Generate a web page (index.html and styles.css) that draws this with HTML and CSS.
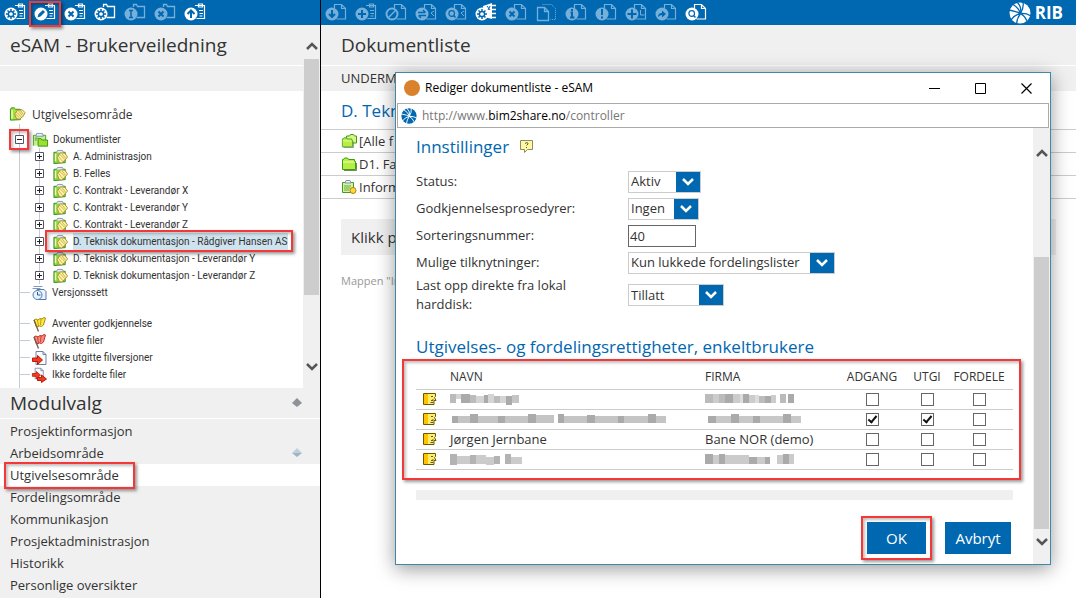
FILE: index.html
```html
<!DOCTYPE html>
<html lang="no">
<head>
<meta charset="utf-8">
<title>eSAM - Brukerveiledning</title>
<link rel="stylesheet" href="styles.css">
</head>
<body>
<svg class="sprite" aria-hidden="true">
  <symbol id="board" viewBox="0 0 22 20"><path d="M11 3.500h9.500v13h-8M14.500 2v3h4V2zM15 8.500h4M15.500 11.500h3.500M15.500 14h3" fill="none" stroke="currentColor" stroke-width="1.200"/><circle cx="7" cy="12" r="6.500" fill="currentColor"/></symbol>
  <symbol id="folder" viewBox="0 0 22 20"><path d="M9.500 5V2.500h3l1 2h7v11h-8" fill="none" stroke="currentColor" stroke-width="1.300"/><circle cx="7" cy="12" r="6.500" fill="currentColor"/></symbol>
  <symbol id="page" viewBox="0 0 22 20"><path d="M9.500 6V2.500h7l4 4v10.500h-9M16.500 2.500v4h4" fill="none" stroke="currentColor" stroke-width="1.200"/><circle cx="7" cy="12" r="6.500" fill="currentColor"/></symbol>
  <symbol id="gear" viewBox="0 0 22 20"><g fill="none" stroke="#0067b1"><circle cx="7" cy="12" r="2.600" stroke-width="1.500"/><path d="M7 7v2M7 15v2M2 12h2M10 12h2M3.500 8.500l1.300 1.300M9.200 14.200l1.300 1.300M3.500 15.500l1.300-1.300M9.200 9.800l1.300-1.300" stroke-width="1.500"/></g></symbol>
  <symbol id="cross" viewBox="0 0 22 20"><path d="M4.500 9.500l5 5M9.500 9.500l-5 5" stroke="#0067b1" stroke-width="2" fill="none"/></symbol>
  <symbol id="lens" viewBox="0 0 22 20"><circle cx="6.700" cy="11.500" r="2.800" stroke="#0067b1" stroke-width="1.200" fill="none"/><path d="M8.500 13.500l2 2" stroke="#0067b1" stroke-width="1.500"/></symbol>
  <symbol id="rib" viewBox="0 0 22 22"><circle cx="11" cy="11" r="10.500" fill="var(--disc)"/><path d="M8 0Q13 5 11.500 11.500Q9 10 0 8M4 2.500Q10 6 11.500 11.500M14 0Q15 6 11.500 11.500M11.500 11.500Q5 13 2 18M11.500 11.500Q8 16 7.500 22M11.500 11.500Q17 11 22 14M11.500 11.500Q16 14 18 19" fill="none" stroke="var(--gap)" stroke-width="1.300"/></symbol>
  <symbol id="dir" viewBox="0 0 16 14"><path d="M1.500 12.500v-10h1l1-1.500h3l1 1.500h6v2h1v8z" fill="#b9ec45" stroke="#38a010"/><path d="M2 5h11.500" stroke="#efffbd"/><path d="M3 13.500h12.500V6" fill="none" stroke="#6c8b55"/></symbol>
  <symbol id="handdir" viewBox="0 0 18 16"><path d="M1.500 14.500V3l1-1.500h3L7 3h5v11z" fill="#a5e33c" stroke="#318b18"/><path d="M2.500 4h1.500v9H2.500z" fill="#ecffc8"/><path d="M8 13L6 8l3-4 5-.5 3 3-2 4-4 3z" fill="#fff09a" stroke="#a88e2c"/><path d="M8 6l5 5M10 4.500l4 5M12 4l3 4M7 8l4 4" fill="none" stroke="#b39a40" stroke-width=".8"/></symbol>
  <symbol id="box" viewBox="0 0 9 9"><path d="M.5.5h8v8h-8z" fill="#fff" stroke="#555566"/><path d="M2 4.500h5" stroke="#222"/></symbol>
  <symbol id="boxplus" viewBox="0 0 9 9"><use href="#box"/><path d="M4.500 2v5" stroke="#222"/></symbol>
  <symbol id="open" viewBox="0 0 18 16"><path d="M1.500 14V3h13v10" fill="#c7ed91" stroke="#4c9d26"/><path d="M4 4l1-3h6l1 3z" fill="#e9f2fb" stroke="#7895ad"/><path d="M3 6h3M3 8h2" stroke="#458b35"/></symbol>
  <symbol id="smallhand" viewBox="0 0 17 17"><path d="M1.500 15.500V3.500h12v11z" fill="#8fd63c" stroke="#36891f"/><path d="M2.500 5H4v8H2.500z" fill="#eaffc4"/><path d="M4 4l1.500-2.500h5L12 4" fill="#e4edf4" stroke="#8194ad"/><path d="M7 14L5 9l3.500-5 4.500.5 3 4-3 3.500-3.500 3z" fill="#fff3a0" stroke="#a99139"/><path d="M8 6l5 5M10 5l4 5M6.500 8l4 5" fill="none" stroke="#b9a044" stroke-width=".8"/></symbol>
  <symbol id="flag" viewBox="0 0 16 16"><path d="M2.500 4l2-1 2 1 2-1.500 2 .5 2-1.500 1.500.5-2 7-2 1.500-2-.5-3 1z" fill="var(--flag)" stroke="var(--edge)"/><path d="M6 4l1 6M9.500 3l-.5 6" fill="none" stroke="var(--edge)" stroke-width=".8"/><path d="M2.500 4l4.500 11.500" stroke="#725a3f" stroke-width="1.300"/></symbol>
  <symbol id="outpage" viewBox="0 0 16 16"><path d="M4.500 1.500h7l3 3v10h-10z" fill="#f8fcff" stroke="#6f829e"/><path d="M11.500 1.500v3h3" fill="none" stroke="#6f829e"/><path d="M1 8h5V5.500l5 4.500-5 4.500v-3H1z" fill="#f43b20" stroke="#b71b0c"/></symbol>
  <symbol id="face" viewBox="0 0 14 14"><path d="M.500 1.500h12v3l-1 1 1.500 3h-2v4H.500z" fill="#ffee6a" stroke="#6b5900"/><path d="M1 2h4v10H1z" fill="#ffc400"/><path d="M8 4.500h2M10 7v1.500H8M7.500 10.500h3" fill="none" stroke="#5e5a38"/></symbol>
  <symbol id="up" viewBox="0 0 14 10"><path d="M2 8l5-5 5 5" fill="none" stroke="#555" stroke-width="2.500"/></symbol>
  <symbol id="down" viewBox="0 0 14 10"><path d="M2 2l5 5 5-5" fill="none" stroke="currentColor" stroke-width="2.500"/></symbol>
</svg>

<div class="app">
  <aside class="side">
    <nav class="tools" aria-label="Mappeverktøy">
      <button><svg><use href="#board"/><use href="#gear"/></svg></button>
      <button class="marked"><svg><use href="#board"/><path d="M3.500 15.500l1-3.500 4.500-4 2 2-4.500 4.500z" fill="#0067b1"/></svg></button>
      <button><svg><use href="#board"/><use href="#cross"/></svg></button>
      <button><svg><use href="#folder"/><use href="#gear"/></svg></button>
      <button disabled><svg><use href="#folder"/><path d="M5 8.500h4M7 8.500v7M5 15.500h4" stroke="#0067b1" stroke-width="1.500"/></svg></button>
      <button disabled><svg><use href="#folder"/><use href="#cross"/></svg></button>
      <button><svg><use href="#board"/><path d="M7 16V9M3.500 12L7 8.500l3.500 3.500" fill="none" stroke="#0067b1" stroke-width="2"/></svg></button>
    </nav>
    <section class="explorer">
      <div class="pane">
        <h1 class="title">eSAM - Brukerveiledning</h1>
        <div class="strip"></div>
        <div class="tree">
          <div class="root"><svg class="ico"><use href="#handdir"/></svg>Utgivelsesområde</div>
          <ul class="branch">
            <li class="first"><span class="row"><svg class="tog"><use href="#box"/></svg><svg class="ico" viewBox="0 0 18 16"><use href="#open" width="18" height="16"/><path d="M6.500 14.500v-8h3l1 1.500h6v6.500z" fill="#9be12e" stroke="#36931a"/></svg>Dokumentlister</span>
              <ul class="leafs">
                <li class="row"><svg class="tog"><use href="#boxplus"/></svg><svg class="ico"><use href="#smallhand"/></svg>A. Administrasjon</li>
                <li class="row"><svg class="tog"><use href="#boxplus"/></svg><svg class="ico"><use href="#smallhand"/></svg>B. Felles</li>
                <li class="row"><svg class="tog"><use href="#boxplus"/></svg><svg class="ico"><use href="#smallhand"/></svg>C. Kontrakt - Leverandør X</li>
                <li class="row"><svg class="tog"><use href="#boxplus"/></svg><svg class="ico"><use href="#smallhand"/></svg>C. Kontrakt - Leverandør Y</li>
                <li class="row"><svg class="tog"><use href="#boxplus"/></svg><svg class="ico"><use href="#smallhand"/></svg>C. Kontrakt - Leverandør Z</li>
                <li class="row chosen"><svg class="tog"><use href="#boxplus"/></svg><svg class="ico"><use href="#smallhand"/></svg><span>D. Teknisk dokumentasjon - Rådgiver Hansen AS</span></li>
                <li class="row"><svg class="tog"><use href="#boxplus"/></svg><svg class="ico"><use href="#smallhand"/></svg>D. Teknisk dokumentasjon - Leverandør Y</li>
                <li class="row"><svg class="tog"><use href="#boxplus"/></svg><svg class="ico"><use href="#smallhand"/></svg>D. Teknisk dokumentasjon - Leverandør Z</li>
              </ul>
            </li>
            <li class="row plain"><svg class="ico" viewBox="0 0 16 16"><path d="M5.500 4.500h7l2 2v8h-9z" fill="#eaf3ff" stroke="#5878a8"/><path d="M2 1.500h9M1 3.500h8" stroke="#7d9bc2"/><circle cx="6" cy="10" r="4.500" fill="#e7f4ff" stroke="#527ca9"/><path d="M6 7v3h3" fill="none" stroke="#285b94"/></svg>Versjonssett</li>
            <li class="row plain apart"><svg class="ico yellow"><use href="#flag"/></svg>Avventer godkjennelse</li>
            <li class="row plain"><svg class="ico red"><use href="#flag"/></svg>Avviste filer</li>
            <li class="row plain"><svg class="ico"><use href="#outpage"/></svg>Ikke utgitte filversjoner</li>
            <li class="row plain"><svg class="ico" viewBox="0 0 16 16"><use href="#outpage" width="13" height="13"/><path d="M6 10.500h4V8l5 4-5 3.500v-2H6z" fill="#f43b20" stroke="#b71b0c"/></svg>Ikke fordelte filer</li>
          </ul>
        </div>
      </div>
      <div class="scroll"><svg class="chev"><use href="#up"/></svg><div class="track"><div class="thumb"></div></div><svg class="chev"><use href="#down"/></svg></div>
    </section>
    <section class="modules">
      <h2 class="title">Modulvalg <svg class="spin" viewBox="0 0 10 10"><path d="M5 0l5 5H0z" fill="#8d9296"/><path d="M0 5h10l-5 4z" fill="#8d9296"/></svg></h2>
      <nav class="menu">
        <a href="#">Prosjektinformasjon</a>
        <a href="#">Arbeidsområde <svg class="spin" viewBox="0 0 10 10"><path d="M5 0l5 5H0z" fill="#bdd0dc"/><path d="M0 5h10l-5 4z" fill="#9eb4c4"/></svg></a>
        <a href="#" class="current">Utgivelsesområde</a>
        <a href="#">Fordelingsområde</a>
        <a href="#">Kommunikasjon</a>
        <a href="#">Prosjektadministrasjon</a>
        <a href="#">Historikk</a>
        <a href="#">Personlige oversikter</a>
      </nav>
    </section>
  </aside>

  <main class="main">
    <nav class="tools" aria-label="Dokumentverktøy">
      <button disabled><svg><use href="#page"/><path d="M7 8v7M4 12l3 3 3-3" fill="none" stroke="#0067b1" stroke-width="2"/></svg></button>
      <button disabled><svg><use href="#board"/><path d="M7 8v8M3 12h8" stroke="#0067b1" stroke-width="2"/></svg></button>
      <button disabled><svg><use href="#page"/><circle cx="7" cy="12" r="4.500" fill="#0067b1"/><path d="M3.500 15.500l7-7" stroke="currentColor" stroke-width="1.500"/></svg></button>
      <button disabled><svg><use href="#page"/><path d="M3 10.500h7M8 8l2.500 2.500M11 13.500H4M6 16l-2.500-2.500" fill="none" stroke="#0067b1" stroke-width="1.300"/><path d="M19 9l-3 2 3 3" fill="none" stroke="currentColor"/></svg></button>
      <button disabled><svg><use href="#page"/><use href="#lens"/><path d="M19 9l-3 2 3 3" fill="none" stroke="currentColor"/></svg></button>
      <button><svg><path d="M8 4l9-3v16l-8-2z" fill="currentColor"/><path d="M17 3.500h4M17 7.500h4M17 11.500h4M17 15.500h4" stroke="currentColor" stroke-width="1.500"/><path d="M12 4l3 4M15 4l-2 4" stroke="#0067b1"/><circle cx="7" cy="12" r="6.500" fill="currentColor"/><use href="#gear"/></svg></button>
      <button disabled><svg><use href="#page"/><use href="#cross"/></svg></button>
      <button disabled><svg><path d="M2.500 5.500h7l4 4v9h-11zM9.500 5.500v4h4" fill="none" stroke="currentColor" stroke-width="1.300"/><path d="M7.500 2.500h9l4 4v11h-5" fill="none" stroke="currentColor" stroke-dasharray="1 1"/></svg></button>
      <button disabled><svg><use href="#page"/><path d="M5.500 10.500H7v5M5 15.500h4.500M6 8h2" fill="none" stroke="#0067b1" stroke-width="2"/></svg></button>
      <button disabled><svg><use href="#page"/><path d="M7 7v6M7 14.500v2" stroke="#0067b1" stroke-width="2"/></svg></button>
      <button disabled><svg><use href="#page"/><path d="M7 7.500v9M2.500 12h9" stroke="#0067b1" stroke-width="2"/><path d="M15.500 8v5h4" fill="none" stroke="currentColor"/></svg></button>
      <button disabled><svg><use href="#page"/><path d="M3 15q0-4 4-4V8.500l4 3.500-4 3.500V13q-2 0-4 2z" fill="#0067b1"/></svg></button>
      <button><svg><use href="#page"/><use href="#lens"/></svg></button>
      <span class="brand"><svg class="rib"><use href="#rib"/></svg>RIB</span>
    </nav>
    <h2 class="title">Dokumentliste</h2>
    <div class="strip">UNDERM</div>
    <h3 class="head">D. Tekn</h3>
    <ul class="docs">
      <li><svg viewBox="0 0 16 14"><path d="M5.500 9V2h3l1-1.500h3L13.500 2h2v7z" fill="#d9f58b" stroke="#38a010"/><use href="#dir" y="3" width="13" height="11"/></svg>[Alle f</li>
      <li><svg><use href="#dir"/></svg>D1. Fa</li>
      <li><svg viewBox="0 0 16 14"><path d="M1.500 12.500v-10h11v10z" fill="#d3f2a0" stroke="#429a24"/><path d="M4 3l1-2.500h4L10 3z" fill="#eef4fa" stroke="#8193a8"/><path d="M3 6h7M3 8h6M3 10h5" stroke="#67a83e"/><circle cx="12" cy="10.500" r="3" fill="#ffd83a" stroke="#ad8212"/></svg>Inform</li>
    </ul>
    <p class="click">Klikk p</p>
    <p class="hint">Mappen "In</p>
  </main>
</div>

<section class="dialog" role="dialog" aria-labelledby="dlg">
  <header class="bar"><span class="ball"></span><span id="dlg">Rediger dokumentliste - eSAM</span>
    <span class="win">
      <svg viewBox="0 0 11 11"><path d="M0 5.500h11" stroke="#000"/></svg>
      <svg viewBox="0 0 11 11"><path d="M.5.5h10v10H.5z" fill="none" stroke="#000"/></svg>
      <svg viewBox="0 0 11 11"><path d="M.5.5l10 10M10.500.5l-10 10" stroke="#000" stroke-width="1.200"/></svg>
    </span>
  </header>
  <div class="url"><svg class="rib"><use href="#rib"/></svg><span>http://www.<b>bim2share.no</b>/controller</span></div>
  <div class="body">
    <div class="content">
      <h3 class="head">Innstillinger <svg class="help" viewBox="0 0 13 13"><path d="M.5.500h12v9h-5l-3 3v-3h-4z" fill="#fffa9b" stroke="#8d8c68"/><path d="M5 3.500q3-2 3 .5l-1.500 1.500M6.500 7v1" fill="none" stroke="#555"/></svg></h3>
      <form class="form">
        <label for="status">Status:</label>
        <span class="pick w1"><select id="status"><option>Aktiv</option></select><svg><use href="#down"/></svg></span>
        <label for="proc">Godkjennelsesprosedyrer:</label>
        <span class="pick w2"><select id="proc"><option>Ingen</option></select><svg><use href="#down"/></svg></span>
        <label for="sort">Sorteringsnummer:</label>
        <input id="sort" class="num" type="text" value="40">
        <label for="link">Mulige tilknytninger:</label>
        <span class="pick w3"><select id="link"><option>Kun lukkede fordelingslister</option></select><svg><use href="#down"/></svg></span>
        <label for="disk">Last opp direkte fra lokal harddisk:</label>
        <span class="pick w4"><select id="disk"><option>Tillatt</option></select><svg><use href="#down"/></svg></span>
      </form>
      <h3 class="head">Utgivelses- og fordelingsrettigheter, enkeltbrukere</h3>
      <div class="rights">
      <table>
        <thead><tr><th class="c0"></th><th>NAVN</th><th class="c2">FIRMA</th><th class="c3">ADGANG</th><th class="c4">UTGI</th><th class="c5">FORDELE</th></tr></thead>
        <tbody>
          <tr><td><svg class="face"><use href="#face"/></svg></td><td><svg class="mask" width="72" height="13"><path d="M0 1h6v9H0zM20 2h6v8h-6zM44 3h6v7h-6z" fill="#bbb"/><path d="M6 1h5v5H6zM26 3h8v7h-8zM38 1h6v9h-6zM50 3h6v7h-6z" fill="#d4d4d4"/><path d="M11 1h9v9h-9zM34 2h4v8h-4zM56 3h6v9h-6z" fill="#aaa"/><path d="M62 2h7v8h-7z" fill="#c5c5c5"/></svg></td><td><svg class="mask" width="92" height="12"><path d="M0 1h8v9H0zM14 1h6v9h-6zM54 3h6v7h-6zM75 1h6v9h-6z" fill="#bbb"/><path d="M8 1h6v9H8zM28 1h7v9h-7zM44 2h6v8h-6zM66 2h5v8h-5z" fill="#ccc"/><path d="M20 1h8v9h-8zM38 1h6v9h-6zM60 3h6v7h-6zM83 1h6v9h-6z" fill="#aaa"/><path d="M35 1h3v9h-3zM50 2h4v8h-4z" fill="#ddd"/></svg></td><td><input type="checkbox" aria-label="Adgang"></td><td><input type="checkbox" aria-label="Utgi"></td><td><input type="checkbox" aria-label="Fordele"></td></tr>
          <tr><td><svg class="face"><use href="#face"/></svg></td><td><svg class="mask" width="218" height="12"><path d="M2 3h6v7H2zM20 1h8v9h-8zM48 3h7v7h-7zM78 1h8v9h-8zM108 1h6v9h-6zM137 2h8v8h-8zM168 3h6v7h-6zM198 1h8v9h-8z" fill="#aaa"/><path d="M8 3h12v7H8zM28 3h20v7H28zM55 3h23v7H55zM86 2h18v8H86zM114 3h23v7h-23zM145 3h23v7h-23zM174 3h24v7h-24zM206 3h10v7h-10z" fill="#c4c4c4"/></svg></td><td><svg class="mask" width="100" height="12"><path d="M3 3h8v7H3zM26 1h8v9h-8zM48 3h7v7h-7zM78 1h8v9h-8z" fill="#aaa"/><path d="M11 3h15v7H11zM34 3h14v7H34zM55 3h23v7H55zM86 3h10v7H86z" fill="#c8c8c8"/></svg></td><td><input type="checkbox" aria-label="Adgang" checked></td><td><input type="checkbox" aria-label="Utgi" checked></td><td><input type="checkbox" aria-label="Fordele"></td></tr>
          <tr><td><svg class="face"><use href="#face"/></svg></td><td>Jørgen Jernbane</td><td>Bane NOR (demo)</td><td><input type="checkbox" aria-label="Adgang"></td><td><input type="checkbox" aria-label="Utgi"></td><td><input type="checkbox" aria-label="Fordele"></td></tr>
          <tr><td><svg class="face"><use href="#face"/></svg></td><td><svg class="mask" width="76" height="13"><path d="M0 1h7v11H0zM20 2h6v9h-6zM44 3h6v8h-6zM55 1h6v10h-6z" fill="#b3b3b3"/><path d="M7 3h13v8H7zM26 2h10v9H26zM36 4h8v8h-8zM61 4h11v7H61z" fill="#cbcbcb"/></svg></td><td><svg class="mask" width="92" height="13"><path d="M0 1h8v10H0zM14 1h6v10h-6zM44 4h8v7h-8zM60 4h5v7h-5zM78 1h6v10h-6z" fill="#aaa"/><path d="M8 2h6v9H8zM20 2h24v9H20zM52 4h8v7h-8zM72 2h6v9h-6zM84 1h5v10h-5z" fill="#cbcbcb"/></svg></td><td><input type="checkbox" aria-label="Adgang"></td><td><input type="checkbox" aria-label="Utgi"></td><td><input type="checkbox" aria-label="Fordele"></td></tr>
        </tbody>
      </table>
      </div>
      <div class="rule"></div>
      <div class="actions"><button class="marked">OK</button><button>Avbryt</button></div>
    </div>
    <div class="scroll"><svg class="chev"><use href="#up"/></svg><div class="track"><div class="thumb"></div></div><svg class="chev"><use href="#down"/></svg></div>
  </div>
</section>
</body>
</html>
```
FILE: styles.css
```css
*, *::before, *::after { box-sizing: border-box; }
body, h1, h2, h3, p, ul { margin: 0; padding: 0; }
ul { list-style: none; }
body {
  --blue: #0067b1;
  --grey: #f0f0f0;
  font: 13px/18px "Open Sans", "Noto Sans", sans-serif;
  color: #333;
  background: #fff;
  overflow: hidden;
}
button, input, select { font: inherit; color: inherit; }
.sprite { position: absolute; width: 0; height: 0; }
.app { display: grid; grid-template-columns: 321px 1fr; height: 100vh; }
.side { display: flex; flex-direction: column; border-right: 1px solid #000; min-height: 0; }

/* Toolbars */
.tools { display: flex; flex: none; height: 25px; padding: 2px 4px; gap: 8px; background: var(--blue); }
.tools button { width: 22px; height: 20px; padding: 0; border: 0; background: none; color: #fff; position: relative; }
.tools button:disabled { color: #75b0da; }
.tools button svg { display: block; width: 22px; height: 20px; }
.brand { display: flex; align-items: center; gap: 4px; margin-left: auto; padding-right: 9px; color: #fff; font-size: 17px; font-weight: 700; }
.rib { --disc: #fff; --gap: var(--blue); width: 22px; height: 22px; }

.title { display: flex; align-items: center; justify-content: space-between; height: 41px; padding-left: 10px; background: var(--grey); border-bottom: 1px solid #fff; font-size: 19px; line-height: 24px; font-weight: 400; }
.strip { height: 25px; background: var(--grey); }

/* Folder tree */
.explorer { display: flex; height: 363px; flex: none; }
.pane { flex: 1; min-width: 0; overflow: hidden; }
.tree { padding-top: 13px; font-family: Roboto, "Open Sans", sans-serif; font-size: 10px; line-height: 17px; white-space: nowrap; }
.root { display: flex; align-items: center; gap: 6px; height: 20px; padding-left: 9px; font-family: "Open Sans", sans-serif; font-size: 12px; }
.ico { width: 17px; height: 16px; flex: none; }
.branch { margin-left: 19px; padding-top: 7px; border-left: 1px solid #c5cdd0; min-height: 270px; }
.row { display: flex; align-items: center; height: 17px; }
.tog { width: 9px; height: 9px; margin-right: 8px; flex: none; position: relative; }
.row .ico { margin-right: 4px; }
.first > .row { margin-left: -5px; }
.leafs { margin-left: 19px; border-left: 1px solid #c5cdd0; }
.leafs .row { margin-left: -5px; }
.chosen span { background: #cfe3ef; }
.plain::before { content: ""; width: 10px; height: 1px; margin-right: 1px; background: #c5cdd0; }
.apart { margin-top: 14px; }
.yellow { --flag: #ffe83b; --edge: #a88c16; }
.red { --flag: #ff8a7e; --edge: #b93129; }

.scroll { display: flex; flex-direction: column; align-items: center; width: 17px; flex: none; background: var(--grey); color: #555; }
.chev { width: 14px; height: 10px; flex: none; }
.track { flex: 1; width: 15px; display: flex; flex-direction: column; }
.thumb { background: #cdcdcd; }
.explorer .scroll { padding: 16px 0; }
.explorer .track { padding-top: 8px; }
.explorer .thumb { height: 78%; }

/* Modules */
.modules { flex: 1; background: var(--grey); }
.modules .title { height: 31px; padding-right: 18px; }
.spin { width: 10px; height: 10px; }
.menu { padding-top: 1px; }
.menu a { display: flex; align-items: center; justify-content: space-between; height: 22px; padding: 0 18px 0 10px; color: inherit; text-decoration: none; }
.menu .current { background: #fff; }

/* Main */
.main { min-width: 0; }
.main .title, .main .strip { padding-left: 20px; }
.main .strip { font-size: 13px; line-height: 25px; }
.head { color: var(--blue); font-size: 17px; line-height: 24px; font-weight: 400; }
.main .head { padding: 8px 20px 6px; }
.docs { border-top: 1px solid #ccc; }
.docs li { display: flex; align-items: center; gap: 2px; height: 23px; padding-left: 20px; border-bottom: 1px solid #ccc; }
.docs svg { width: 16px; height: 14px; }
.click { margin: 20px 20px 0; padding: 9px 10px; background: var(--grey); font-size: 15px; line-height: 18px; }
.hint { margin: 17px 20px; color: #999; font-size: 11px; }

/* Dialog window */
.dialog { position: absolute; left: 395px; right: 25px; top: 72px; display: flex; flex-direction: column; border: 1px solid #3c89aa; background: #fff; box-shadow: 0 4px 18px rgba(0, 0, 0, .4); }
.bar { display: flex; align-items: center; gap: 5px; height: 30px; padding-left: 8px; color: #000; font-size: 12px; }
.ball { width: 16px; height: 16px; border-radius: 50%; background: #d9822b; }
.win { display: flex; gap: 35px; margin-left: auto; padding-right: 18px; }
.win svg { width: 11px; height: 11px; }
.url { display: flex; align-items: center; gap: 5px; height: 25px; margin: 0 1px; padding-left: 3px; border: 1px solid #aaa; color: #777; font-size: 12px; }
.url b { color: #000; font-weight: 400; }
.url .rib { --disc: var(--blue); --gap: #fff; width: 16px; height: 16px; }
.body { display: flex; }
.content { flex: 1; padding: 7px 20px 10px; min-width: 0; }
.help { width: 13px; height: 13px; margin-left: 6px; }
.form { display: grid; grid-template-columns: 212px 1fr; grid-template-rows: 27px 27px 27px 27px 38px; align-items: center; padding: 9px 0 21px; line-height: 19px; }
.form label { width: 160px; white-space: normal; }
.pick { display: grid; height: 22px; border: 1px solid #ccc; }
.pick > * { grid-area: 1 / 1; }
.pick select { appearance: none; width: 100%; padding: 0 2px; border: 0; background: #fff; }
.pick svg { justify-self: end; width: 24px; height: 20px; padding: 5px; background: var(--blue); color: #fff; pointer-events: none; }
.w1 { width: 73px; }
.w2 { width: 71px; }
.w3 { width: 207px; }
.w4 { width: 96px; }
.num { width: 68px; height: 22px; padding: 0 1px; border: 1px solid #666; }

.rights, .marked { position: relative; }
table { width: 100%; border-collapse: collapse; table-layout: fixed; }
th { height: 30px; padding: 6px 0 0; border-bottom: 1px solid #ccc; font-size: 12px; font-weight: 400; text-align: left; }
td { height: 20px; padding: 0; border-bottom: 1px solid #ccc; line-height: 18px; }
.c0 { width: 34px; }
.c2 { width: 130px; }
.c3 { width: 74px; }
.c4 { width: 36px; }
.c5 { width: 68px; }
th:nth-child(n+4), td:nth-child(n+4) { text-align: center; }
td svg { display: block; }
.face { width: 14px; height: 14px; margin-left: 7px; }
td input { appearance: none; display: block; width: 13px; height: 13px; margin: 0 auto; border: 1px solid #666; background: #fff; }
td input:checked::after { content: ""; display: block; width: 5px; height: 9px; margin: 0 0 0 3px; border: solid #111; border-width: 0 2px 2px 0; transform: rotate(40deg); }
.rule { height: 10px; margin-top: 20px; background: var(--grey); }
.actions { display: flex; justify-content: flex-end; gap: 19px; padding: 22px 2px 0; }
.actions button { height: 32px; padding: 0; width: 66px; border: 0; background: var(--blue); color: #fff; font-size: 15px; }
.actions .marked { width: 59px; }
.dialog .scroll { padding: 20px 0 17px; }
.dialog .track { padding-top: 99px; }
.dialog .thumb { flex: 1; margin-bottom: 8px; }

/* Red callout frames */
.rights::after, .marked::after, .chosen::after, .current::after, .first > .row::before {
  content: ""; position: absolute; z-index: 1; border: 2px solid #f43737; box-shadow: 2px 2px 3px rgba(0, 0, 0, .4), inset 2px 2px 3px rgba(0, 0, 0, .25); pointer-events: none;
}
.chosen, .current, .first > .row { position: relative; }
.rights::after { inset: 0 -8px -10px -14px; }
.tools .marked::after { inset: -1px -5px -5px -5px; }
.actions .marked::after { inset: -6px; }
.chosen::after { left: 10px; top: -3px; width: 248px; height: 22px; }
.current::after { left: 4px; top: -2px; width: 131px; height: 27px; }
.first > .row::before { left: -6px; top: -2px; width: 20px; height: 21px; }
```
